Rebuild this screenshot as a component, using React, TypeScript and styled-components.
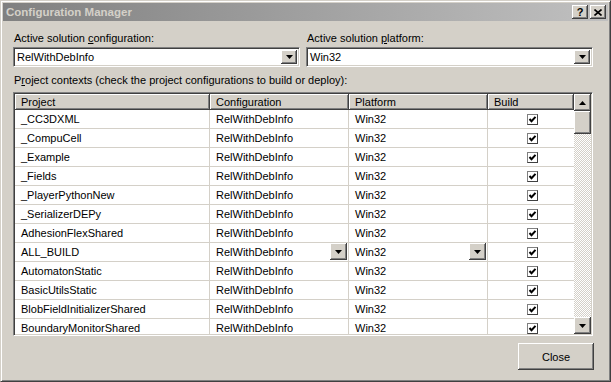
import styled, { createGlobalStyle } from 'styled-components';

const face = '#d4d0c8';
const shadow = '#808080';
const darkShadow = '#404040';
const font = '"Liberation Sans", Arial, sans-serif';

const projects = [
  '_CC3DXML',
  '_CompuCell',
  '_Example',
  '_Fields',
  '_PlayerPythonNew',
  '_SerializerDEPy',
  'AdhesionFlexShared',
  'ALL_BUILD',
  'AutomatonStatic',
  'BasicUtilsStatic',
  'BlobFieldInitializerShared',
  'BoundaryMonitorShared',
];

// row that currently shows the in-cell dropdowns
const editingRow = 'ALL_BUILD';

const GlobalStyle = createGlobalStyle`
  html, body {
    margin: 0;
    padding: 0;
    background: ${face};
  }
  body {
    font-family: ${font};
    font-size: 11px;
    color: #000;
  }
`;

function Arrow({ dir = 'down' }: { dir?: 'up' | 'down' }) {
  return (
    <svg width="7" height="4" viewBox="0 0 7 4">
      {dir === 'down' ? (
        <polygon points="0,0 7,0 3.5,4" fill="#000" />
      ) : (
        <polygon points="0,4 7,4 3.5,0" fill="#000" />
      )}
    </svg>
  );
}

function Check() {
  return (
    <svg width="9" height="9" viewBox="0 0 9 9">
      <polyline
        points="1.5,4 3.5,6.2 7.5,1.8"
        fill="none"
        stroke="#000"
        strokeWidth="2"
      />
    </svg>
  );
}

function CloseGlyph() {
  return (
    <svg width="8" height="7" viewBox="0 0 8 7">
      <path d="M0.5 0.5 L7.5 6.5 M7.5 0.5 L0.5 6.5" stroke="#000" strokeWidth="1.6" />
    </svg>
  );
}

export default function App() {
  return (
    <>
      <GlobalStyle />
      <Window>
        <TitleBar>
          <Title>Configuration Manager</Title>
          <TitleButtons>
            <TitleButton aria-label="Help">?</TitleButton>
            <TitleButton aria-label="Close">
              <CloseGlyph />
            </TitleButton>
          </TitleButtons>
        </TitleBar>

        <Body>
          <Fields>
            <Field>
              <Label>
                Active solution <u>c</u>onfiguration:
              </Label>
              <Combo>
                <ComboText>RelWithDebInfo</ComboText>
                <DropButton>
                  <Arrow />
                </DropButton>
              </Combo>
            </Field>
            <Field>
              <Label>
                Active solution <u>p</u>latform:
              </Label>
              <Combo>
                <ComboText>Win32</ComboText>
                <DropButton>
                  <Arrow />
                </DropButton>
              </Combo>
            </Field>
          </Fields>

          <ContextsLabel>
            P<u>r</u>oject contexts (check the project configurations to build or deploy):
          </ContextsLabel>

          <GridFrame>
            <Table>
              <HeaderRow>
                <HeaderCell>Project</HeaderCell>
                <HeaderCell>Configuration</HeaderCell>
                <HeaderCell>Platform</HeaderCell>
                <HeaderCell>Build</HeaderCell>
              </HeaderRow>
              {projects.map(name => (
                <Row key={name}>
                  <Cell>{name}</Cell>
                  <Cell>
                    RelWithDebInfo
                    {name === editingRow && (
                      <CellDrop>
                        <Arrow />
                      </CellDrop>
                    )}
                  </Cell>
                  <Cell>
                    Win32
                    {name === editingRow && (
                      <CellDrop>
                        <Arrow />
                      </CellDrop>
                    )}
                  </Cell>
                  <Cell $center>
                    <CheckBox>
                      <Check />
                    </CheckBox>
                  </Cell>
                </Row>
              ))}
            </Table>
            <ScrollBar>
              <ScrollButton>
                <Arrow dir="up" />
              </ScrollButton>
              <Thumb />
              <Track />
              <ScrollButton>
                <Arrow />
              </ScrollButton>
            </ScrollBar>
          </GridFrame>

          <Footer>
            <PushButton>Close</PushButton>
          </Footer>
        </Body>
      </Window>
    </>
  );
}

const raised = `
  background: ${face};
  box-shadow: inset -1px -1px ${darkShadow}, inset 1px 1px #fff,
    inset -2px -2px ${shadow}, inset 2px 2px ${face};
`;

const Window = styled.div`
  box-sizing: border-box;
  width: 611px;
  height: 382px;
  display: flex;
  flex-direction: column;
  padding: 2px;
  background: ${face};
  border-top: 1px solid ${face};
  border-left: 1px solid ${face};
  border-right: 1px solid ${darkShadow};
  border-bottom: 1px solid ${darkShadow};
  box-shadow: inset 1px 1px #fff, inset -1px -1px ${shadow};
`;

const TitleBar = styled.div`
  height: 18px;
  display: flex;
  align-items: center;
  justify-content: space-between;
  background: linear-gradient(to right, #808080, #c0c0c0);
`;

const Title = styled.span`
  color: ${face};
  font-weight: bold;
  font-size: 11.5px;
  padding-left: 3px;
`;

const TitleButtons = styled.div`
  display: flex;
  gap: 2px;
  padding-right: 2px;
`;

const TitleButton = styled.div`
  ${raised}
  width: 16px;
  height: 14px;
  display: flex;
  align-items: center;
  justify-content: center;
  font-weight: bold;
  font-size: 11px;
  line-height: 1;
`;

const Body = styled.div`
  flex: 1;
  display: flex;
  flex-direction: column;
  padding: 11px 15px 0 10px;
`;

const Fields = styled.div`
  display: grid;
  grid-template-columns: 287px 1fr;
  column-gap: 6px;
`;

const Field = styled.div`
  display: flex;
  flex-direction: column;
  gap: 2px;
`;

const Label = styled.div`
  line-height: 13px;
  padding-left: 1px;
`;

const Combo = styled.div`
  box-sizing: border-box;
  height: 20px;
  display: flex;
  align-items: stretch;
  background: #fff;
  border-top: 1px solid ${shadow};
  border-left: 1px solid ${shadow};
  border-right: 1px solid #fff;
  border-bottom: 1px solid #fff;
  box-shadow: inset 1px 1px ${darkShadow}, inset -1px -1px ${face};
  padding: 2px;
`;

const ComboText = styled.div`
  flex: 1;
  display: flex;
  align-items: center;
  padding-left: 1px;
`;

const DropButton = styled.div`
  ${raised}
  width: 16px;
  display: flex;
  align-items: center;
  justify-content: center;
`;

const ContextsLabel = styled(Label)`
  margin-top: 7px;
`;

const GridFrame = styled.div`
  box-sizing: border-box;
  margin-top: 5px;
  height: 244px;
  display: flex;
  border-top: 1px solid ${shadow};
  border-left: 1px solid ${shadow};
  border-right: 1px solid #fff;
  border-bottom: 1px solid #fff;
  box-shadow: inset 1px 1px ${darkShadow}, inset -1px -1px ${face};
  padding: 1px;
  background: #fff;
`;

const Table = styled.div`
  flex: 1;
  overflow: hidden;
  display: flex;
  flex-direction: column;
`;

const columns = '195px 139px 139px 1fr';

const HeaderRow = styled.div`
  display: grid;
  grid-template-columns: ${columns};
  height: 16px;
  flex: none;
`;

const HeaderCell = styled.div`
  ${raised}
  display: flex;
  align-items: center;
  padding-left: 6px;
`;

const Row = styled.div`
  display: grid;
  grid-template-columns: ${columns};
  height: 19px;
  flex: none;
  border-bottom: 1px solid ${face};
  box-sizing: border-box;
`;

const Cell = styled.div<{ $center?: boolean }>`
  display: flex;
  align-items: center;
  justify-content: ${({ $center }) => ($center ? 'center' : 'flex-start')};
  padding-left: ${({ $center }) => ($center ? '0' : '6px')};
  border-right: 1px solid ${face};
  position: relative;
  &:last-child {
    border-right: none;
  }
`;

const CellDrop = styled.div`
  ${raised}
  position: absolute;
  right: 1px;
  top: 0;
  width: 17px;
  height: 17px;
  display: flex;
  align-items: center;
  justify-content: center;
`;

const CheckBox = styled.div`
  box-sizing: border-box;
  width: 11px;
  height: 11px;
  margin-left: 2px;
  background: #fff;
  border: 1px solid ${shadow};
  border-right-color: ${darkShadow};
  border-bottom-color: ${darkShadow};
  display: flex;
  align-items: center;
  justify-content: center;
`;

const ScrollBar = styled.div`
  width: 17px;
  display: flex;
  flex-direction: column;
`;

const ScrollButton = styled.div`
  ${raised}
  height: 17px;
  display: flex;
  align-items: center;
  justify-content: center;
`;

const Thumb = styled.div`
  ${raised}
  height: 23px;
`;

const Track = styled.div`
  flex: 1;
  background: repeating-conic-gradient(${face} 0 25%, #fff 0 50%) 0 0 / 2px 2px;
`;

const Footer = styled.div`
  display: flex;
  justify-content: flex-end;
  margin-top: 7px;
  margin-right: -1px;
`;

const PushButton = styled.div`
  ${raised}
  width: 76px;
  height: 27px;
  display: flex;
  align-items: center;
  justify-content: center;
`;
